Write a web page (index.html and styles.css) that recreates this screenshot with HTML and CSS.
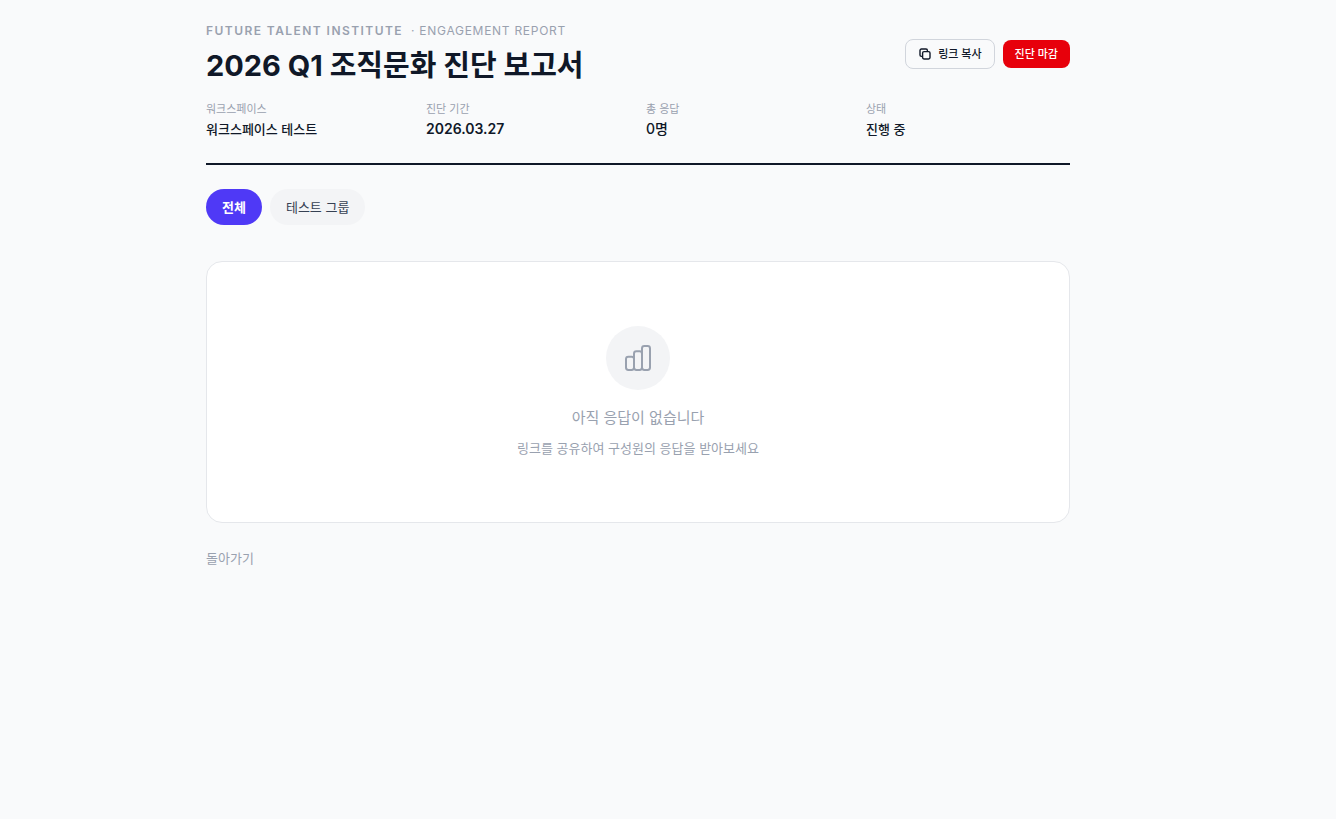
FILE: index.html
```html
<!DOCTYPE html>
<html lang="ko">

<head>
    <meta charset="UTF-8">
    <meta name="viewport" content="width=device-width, initial-scale=1.0">
    <title>2026 Q1 조직문화 진단 보고서</title>
    <link rel="stylesheet" href="styles.css">
</head>

<body>

    <main class="container">
        <!-- Report header -->
        <header class="report-header">
            <div class="header-top">
                <div>
                    <p class="eyebrow"><strong>FUTURE TALENT INSTITUTE</strong><span>· ENGAGEMENT REPORT</span></p>
                    <h1>2026 Q1 조직문화 진단 보고서</h1>
                </div>
                <div class="actions">
                    <button type="button" class="btn btn-outline">
                        <svg class="icon-copy" viewBox="0 0 14 14" aria-hidden="true">
                            <rect x="4.6" y="4.6" width="7.4" height="7.4" rx="1.4" />
                            <path d="M4.5 9.4H3.4A1.4 1.4 0 0 1 2 8V3.4A1.4 1.4 0 0 1 3.4 2H8a1.4 1.4 0 0 1 1.4 1.4v1.1" />
                        </svg>
                        링크 복사
                    </button>
                    <button type="button" class="btn btn-danger">진단 마감</button>
                </div>
            </div>
            <dl class="meta">
                <div>
                    <dt>워크스페이스</dt>
                    <dd>워크스페이스 테스트</dd>
                </div>
                <div>
                    <dt>진단 기간</dt>
                    <dd class="date">2026.03.27</dd>
                </div>
                <div>
                    <dt>총 응답</dt>
                    <dd class="count">0명</dd>
                </div>
                <div>
                    <dt>상태</dt>
                    <dd>진행 중</dd>
                </div>
            </dl>
        </header>

        <!-- Group filter -->
        <div class="tabs">
            <button type="button" class="active">전체</button>
            <button type="button">테스트 그룹</button>
        </div>

        <!-- Empty state -->
        <section class="empty">
            <div class="empty-icon">
                <svg viewBox="0 0 32 32" aria-hidden="true">
                    <rect x="4" y="14.7" width="8" height="13.3" rx="2.4" />
                    <rect x="12" y="9.3" width="8" height="18.7" rx="2.4" />
                    <rect x="20" y="4" width="8" height="24" rx="2.4" />
                </svg>
            </div>
            <p class="empty-title">아직 응답이 없습니다</p>
            <p class="empty-text">링크를 공유하여 구성원의 응답을 받아보세요</p>
        </section>

        <a href="#" class="back-link">돌아가기</a>
    </main>

</body>

</html>
```
FILE: styles.css
```css
* {
    box-sizing: border-box;
    margin: 0;
    padding: 0;
}

body,
button {
    font-family: Inter, 'Noto Sans CJK KR', sans-serif;
}

body {
    padding-right: 60px;
    background-color: #f9fafb;
    color: #101828;
}

.container {
    max-width: 896px;
    margin: 0 auto;
    padding: 24px 16px;
}

.report-header {
    padding-bottom: 24px;
    border-bottom: 2px solid #101828;
}

.header-top {
    display: flex;
    justify-content: space-between;
    align-items: center;
    margin-bottom: 16px;
}

.eyebrow {
    display: flex;
    gap: 8px;
    margin-bottom: 9px;
    font-size: 12px;
    line-height: 14px;
    letter-spacing: 0.06em;
    color: #99a1af;
}

.eyebrow strong {
    font-weight: 600;
    letter-spacing: 0.12em;
}

h1 {
    font-size: 29px;
    line-height: 37px;
    font-weight: 700;
}

.actions {
    display: flex;
    align-items: center;
    gap: 8px;
}

.btn {
    display: flex;
    align-items: center;
    gap: 6px;
    padding: 6px 12px;
    border: none;
    border-radius: 8px;
    font-size: 11px;
    line-height: 16px;
    font-weight: 500;
    cursor: pointer;
}

.btn-outline {
    background-color: transparent;
    border: 1px solid #d1d5dc;
    color: #101828;
}

.btn-danger {
    background-color: #e7000b;
    color: white;
}

.icon-copy {
    width: 14px;
    height: 14px;
    fill: none;
    stroke: currentColor;
    stroke-width: 1.4;
}

.meta {
    display: grid;
    grid-template-columns: repeat(4, 1fr);
    gap: 16px;
}

.meta dt {
    font-size: 11px;
    line-height: 19px;
    color: #99a1af;
}

.meta dd {
    font-size: 13px;
    line-height: 20px;
    font-weight: 500;
}

.meta .date,
.meta .count {
    font-size: 14px;
}

.meta .date {
    font-weight: 600;
}

.tabs {
    display: flex;
    gap: 8px;
    margin: 24px 0 36px;
}

.tabs button {
    padding: 8px 16px;
    border: none;
    border-radius: 18px;
    background-color: #f3f4f6;
    color: #364153;
    font-size: 13px;
    line-height: 20px;
    font-weight: 400;
    cursor: pointer;
}

.tabs button.active {
    background-color: #4f39f6;
    color: white;
    font-weight: 600;
}

.empty {
    padding: 64px 16px;
    background-color: #fff;
    border: 1px solid #e5e7eb;
    border-radius: 16px;
    text-align: center;
    color: #99a1af;
}

.empty-icon {
    display: flex;
    align-items: center;
    justify-content: center;
    width: 64px;
    height: 64px;
    margin: 0 auto 16px;
    border-radius: 50%;
    background-color: #f3f4f6;
}

.empty-icon svg {
    width: 32px;
    height: 32px;
    fill: none;
    stroke: currentColor;
    stroke-width: 2;
}

.empty-title {
    font-size: 15px;
    line-height: 24px;
}

.empty-text {
    margin-top: 8px;
    font-size: 13px;
    line-height: 20px;
}

.back-link {
    display: inline-block;
    margin-top: 25px;
    color: #99a1af;
    font-size: 13px;
    line-height: 20px;
    text-decoration: none;
}
```
